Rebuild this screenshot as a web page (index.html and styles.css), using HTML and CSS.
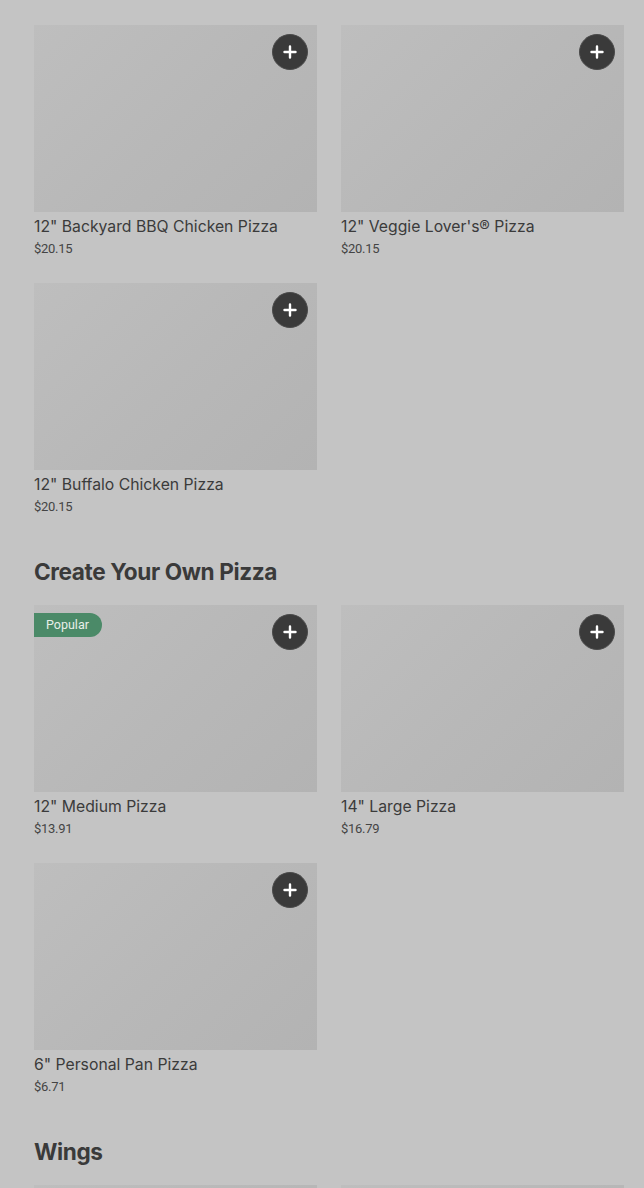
FILE: index.html
```html
<!DOCTYPE html>
<html lang="en">
<head>
<meta charset="utf-8">
<title>Menu</title>
<link rel="stylesheet" href="styles.css">
</head>
<body>
<main class="menu">
  <section class="section section-first">
    <div class="grid">
      <div class="card">
        <div class="thumb"></div>
        <div class="name">12" Pepperoni Lover's® Pizza</div>
        <div class="price">$20.15</div>
      </div>
      <div class="card">
        <div class="thumb"></div>
        <div class="name">12" Meat Lover's® Pizza</div>
        <div class="price">$20.15</div>
      </div>
      <div class="card">
        <div class="thumb"><button class="add" aria-label="Add"><svg viewBox="0 0 14 14" width="14" height="14"><path d="M7 1.5v11M1.5 7h11" stroke="#fff" stroke-width="2.4" stroke-linecap="round"/></svg></button></div>
        <div class="name">12" Backyard BBQ Chicken Pizza</div>
        <div class="price">$20.15</div>
      </div>
      <div class="card">
        <div class="thumb"><button class="add" aria-label="Add"><svg viewBox="0 0 14 14" width="14" height="14"><path d="M7 1.5v11M1.5 7h11" stroke="#fff" stroke-width="2.4" stroke-linecap="round"/></svg></button></div>
        <div class="name">12" Veggie Lover's® Pizza</div>
        <div class="price">$20.15</div>
      </div>
      <div class="card">
        <div class="thumb"><button class="add" aria-label="Add"><svg viewBox="0 0 14 14" width="14" height="14"><path d="M7 1.5v11M1.5 7h11" stroke="#fff" stroke-width="2.4" stroke-linecap="round"/></svg></button></div>
        <div class="name">12" Buffalo Chicken Pizza</div>
        <div class="price">$20.15</div>
      </div>
    </div>
  </section>

  <section class="section">
    <h2 class="heading">Create Your Own Pizza</h2>
    <div class="grid">
      <div class="card">
        <div class="thumb"><span class="badge">Popular</span><button class="add" aria-label="Add"><svg viewBox="0 0 14 14" width="14" height="14"><path d="M7 1.5v11M1.5 7h11" stroke="#fff" stroke-width="2.4" stroke-linecap="round"/></svg></button></div>
        <div class="name">12" Medium Pizza</div>
        <div class="price">$13.91</div>
      </div>
      <div class="card">
        <div class="thumb"><button class="add" aria-label="Add"><svg viewBox="0 0 14 14" width="14" height="14"><path d="M7 1.5v11M1.5 7h11" stroke="#fff" stroke-width="2.4" stroke-linecap="round"/></svg></button></div>
        <div class="name">14" Large Pizza</div>
        <div class="price">$16.79</div>
      </div>
      <div class="card">
        <div class="thumb"><button class="add" aria-label="Add"><svg viewBox="0 0 14 14" width="14" height="14"><path d="M7 1.5v11M1.5 7h11" stroke="#fff" stroke-width="2.4" stroke-linecap="round"/></svg></button></div>
        <div class="name">6" Personal Pan Pizza</div>
        <div class="price">$6.71</div>
      </div>
    </div>
  </section>

  <section class="section">
    <h2 class="heading">Wings</h2>
    <div class="grid">
      <div class="card">
        <div class="thumb"></div>
      </div>
      <div class="card">
        <div class="thumb"></div>
      </div>
    </div>
  </section>
</main>
</body>
</html>
```

FILE: styles.css
```css
html, body {
  margin: 0;
  padding: 0;
  background: #c4c4c4;
  overflow: hidden;
}
body {
  font-family: Roboto, "Liberation Sans", Arial, sans-serif;
  color: #3b3b3b;
}
.menu {
  width: 590px;
  padding-left: 34px;
}
.section-first {
  margin-top: -233px;
}
.heading {
  margin: 42px 0 19px;
  font-family: Inter, "Liberation Sans", Arial, sans-serif;
  font-weight: 700;
  font-size: 22.6px;
  line-height: 28px;
  letter-spacing: -0.4px;
  color: #3a3a3a;
}
.grid {
  display: grid;
  grid-template-columns: 283px 283px;
  column-gap: 24px;
  row-gap: 25px;
}
.thumb {
  position: relative;
  height: 187px;
  background: linear-gradient(135deg, #bebebe 0%, #b8b8b8 50%, #b3b3b3 100%);
}
.add {
  position: absolute;
  top: 9px;
  right: 9px;
  width: 36px;
  height: 36px;
  border-radius: 50%;
  border: 1px solid #4a4a4a;
  background: #3a3a3a;
  padding: 0;
  display: flex;
  align-items: center;
  justify-content: center;
}
.add svg {
  display: block;
}
.badge {
  position: absolute;
  top: 8px;
  left: 0;
  height: 24px;
  width: 68px;
  box-sizing: border-box;
  padding-left: 12px;
  background: #4b8a68;
  border-radius: 0 12px 12px 0;
  color: #e8efe9;
  font-size: 12.5px;
  line-height: 24px;
}
.name {
  margin-top: 5px;
  font-family: Inter, Roboto, "Liberation Sans", Arial, sans-serif;
  font-size: 15.75px;
  line-height: 20px;
  letter-spacing: 0;
  color: #3b3b3b;
}
.price {
  margin-top: 3px;
  font-size: 13px;
  line-height: 18px;
  letter-spacing: -0.3px;
  color: #444;
}
```
